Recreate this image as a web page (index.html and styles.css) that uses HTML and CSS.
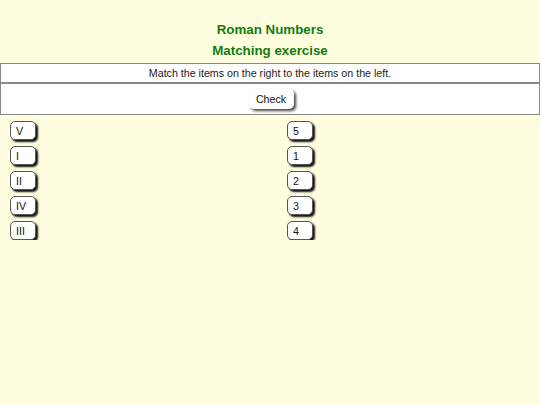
FILE: index.html
```html
<!DOCTYPE html>
<html lang="en">
<head>
    <meta charset="UTF-8">
    <title>Roman Numbers - Matching exercise</title>
    <link rel="stylesheet" href="styles.css">
</head>
<body>
    <div class="title">
        <h1>Roman Numbers</h1>
        <h2>Matching exercise</h2>
    </div>
    <div class="box instructions">Match the items on the right to the items on the left.</div>
    <div class="box actions">
        <button class="check">Check</button>
    </div>
    <div class="match">
        <div class="column">
            <button class="item">V</button>
            <button class="item">I</button>
            <button class="item">II</button>
            <button class="item">IV</button>
            <button class="item">III</button>
        </div>
        <div class="column">
            <button class="item">5</button>
            <button class="item">1</button>
            <button class="item">2</button>
            <button class="item">3</button>
            <button class="item">4</button>
        </div>
    </div>
</body>
</html>
```
FILE: styles.css
```css
body {
    font-family: "Liberation Sans", Arial, sans-serif;
    font-size: 10.67px;
    color: #222;
    background-color: #ffffe0;
    margin: 0;
    padding: 0;
}
.title {
    padding-top: 19px;
    margin-bottom: 2px;
    text-align: center;
    color: #107c10;
}
.title h1, .title h2 {
    font-size: 13.33px;
    font-weight: bold;
    line-height: 21px;
    margin: 0;
}
.box {
    background-color: #fff;
    border: 1px solid #888;
    text-align: center;
}
.instructions {
    line-height: 18px;
}
.actions {
    padding: 5px 0;
}
button {
    font-family: inherit;
    font-size: 10.67px;
    color: #111;
    background-color: #fff;
    cursor: pointer;
}
.check {
    width: 45px;
    height: 20px;
    padding: 0;
    border: none;
    border-radius: 5px;
    box-shadow: 2px 2px 3px #444;
    display: block;
    margin: 0 auto;
    position: relative;
    left: 1px;
}
.match {
    display: flex;
    padding: 6px 0 0 10px;
}
.column {
    display: flex;
    flex-direction: column;
    gap: 6px;
}
.column:first-child {
    width: 277px;
}
.item {
    width: 26px;
    height: 19px;
    box-sizing: border-box;
    padding: 0 0 0 5px;
    text-align: left;
    border: 1px solid #555;
    border-radius: 5px;
    box-shadow: 2px 2px 2px #111;
}
```
